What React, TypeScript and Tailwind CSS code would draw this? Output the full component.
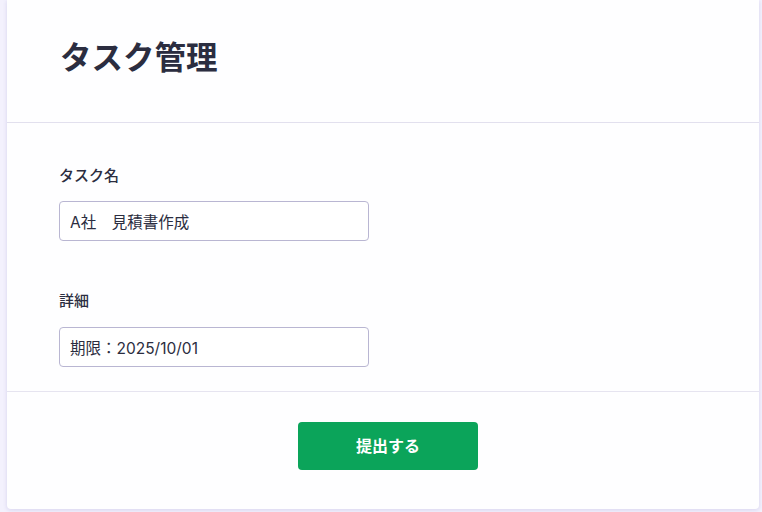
import React from 'react'

export default function App() {
  return (
    <div
      className="min-h-[512px] bg-[#f3f1fd] pl-[7px] pr-[3px] pb-[3px]"
      style={{ fontFamily: "Inter, 'Noto Sans CJK JP', sans-serif" }}
    >
      <div className="bg-[#fefeff] rounded-b-[4px] shadow-[0_1px_4px_rgba(90,80,170,0.18)]">
        <div className="border-b border-[#e2e0ee] pt-[40px] pb-[46px] pl-[53px]">
          <h1 className="text-[31.5px] leading-[36px] font-bold text-[#2b2d40]">タスク管理</h1>
        </div>

        <div className="pl-[52px] pt-[43px] pb-[24px] border-b border-[#e6e4f0]">
          <label className="block text-[15px] leading-[20px] font-medium text-[#2b2d40] mb-[15px]">
            タスク名
          </label>
          <input
            readOnly
            value="A社　見積書作成"
            className="block w-[310px] h-[40px] px-[10px] text-[15.5px] text-[#2b2d40] bg-white border border-[#b9b6d2] rounded-[4px] outline-none"
          />

          <label className="block text-[15px] leading-[20px] font-medium text-[#2b2d40] mt-[50px] mb-[16px]">
            詳細
          </label>
          <input
            readOnly
            value="期限：2025/10/01"
            className="block w-[310px] h-[40px] px-[10px] text-[15.5px] text-[#2b2d40] bg-white border border-[#b9b6d2] rounded-[4px] outline-none"
          />
        </div>

        <div className="flex justify-center pl-[10px] pt-[30px] pb-[39px]">
          <button className="w-[180px] h-[48px] bg-[#0ba45a] text-white text-[16px] font-bold rounded-[4px]">
            提出する
          </button>
        </div>
      </div>
    </div>
  )
}
